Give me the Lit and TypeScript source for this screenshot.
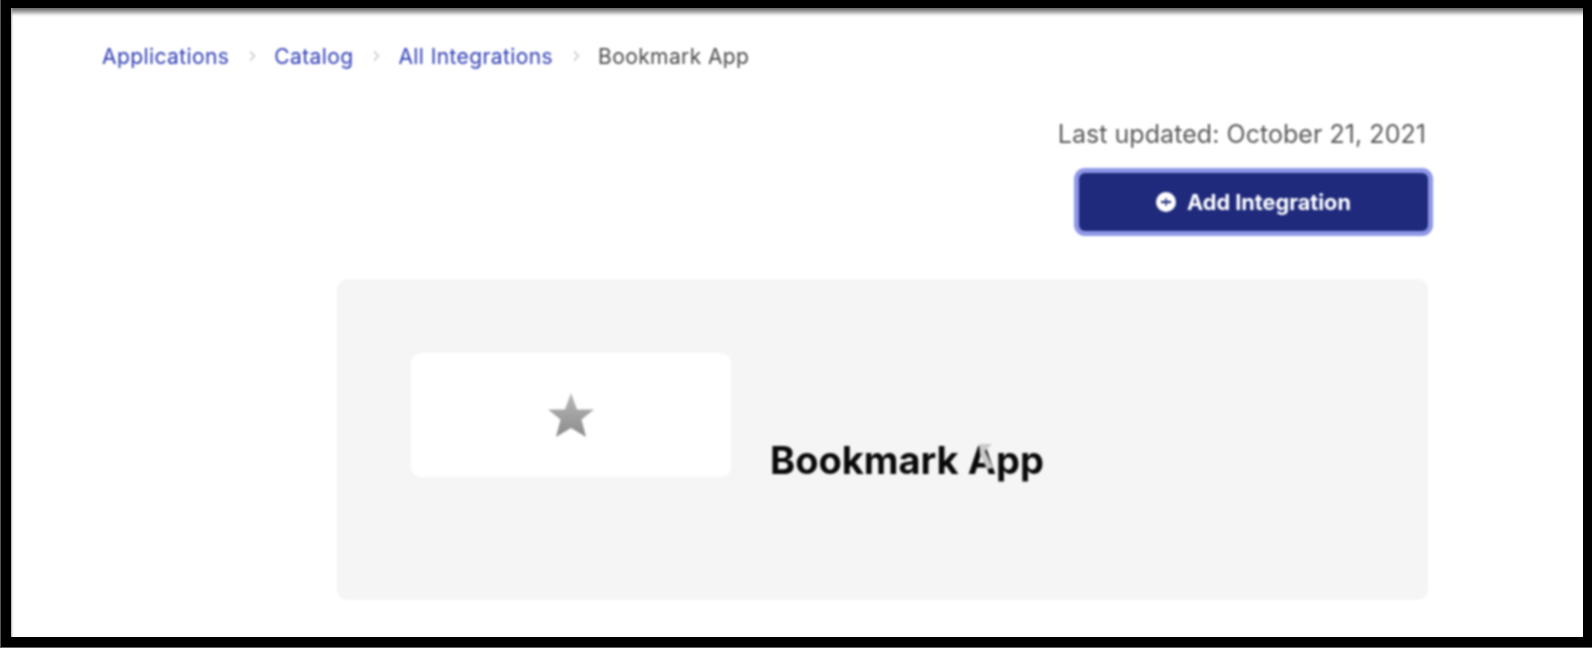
import { LitElement, html, css } from 'lit';
import { customElement } from 'lit/decorators.js';

@customElement('app-root')
export class AppRoot extends LitElement {
  static styles = css`
    :host {
      display: block;
      width: 1592px;
      height: 648px;
      background: #000;
      font-family: Inter, "Liberation Sans", sans-serif;
    }
    .frame {
      box-sizing: border-box;
      width: 1592px;
      height: 648px;
      padding: 8px 9px 10px 10px;
      border-left: 1px solid #555;
      border-bottom: 1px solid #666;
    }
    .screen {
      box-sizing: border-box;
      height: 100%;
      padding: 34px 155px 0 91px;
      background: linear-gradient(#666, #999 3px, #eee 7px, #fff 9px) top / 100% 9px no-repeat, #fff;
      box-shadow: inset 2px 0 2px -1px #aaa;
      display: flex;
      flex-direction: column;
    }
    .crumbs, .meta, .card { filter: blur(0.8px); }
    .crumbs {
      display: flex;
      align-items: center;
      height: 28px;
      font-size: 21px;
      letter-spacing: 0.4px;
      color: #4a4a4a;
    }
    .crumbs a { color: #2c3cb4; text-decoration: none; }
    .sep { width: 45px; display: flex; justify-content: center; }
    .meta {
      display: flex;
      flex-direction: column;
      align-items: flex-end;
      margin-top: 49px;
    }
    .updated { font-size: 25px; letter-spacing: 0.05px; line-height: 30px; color: #5a5a5a; padding-right: 2px; }
    .add {
      margin-top: 24px;
      box-sizing: border-box;
      width: 349px;
      height: 58px;
      border: 0;
      border-radius: 6px;
      background: #1f2a7c;
      box-shadow: 0 0 0 5px #8d97e6;
      color: #fff;
      font: 700 21.7px Inter, "Liberation Sans", sans-serif;
      display: flex;
      align-items: center;
      justify-content: center;
      gap: 11px;
    }
    .card {
      margin: 48px 0 0 235px;
      height: 321px;
      background: #f5f5f5;
      border-radius: 10px;
      display: flex;
      align-items: flex-start;
      padding: 74px 0 0 74px;
      box-sizing: border-box;
    }
    .logo {
      width: 320px;
      height: 124px;
      background: #fff;
      border-radius: 10px;
      display: flex;
      align-items: center;
      justify-content: center;
    }
    h1 {
      position: relative;
      margin: 85px 0 0 39px;
      font-size: 38px;
      line-height: 44px;
      font-weight: 700;
      color: #0a0a0a;
    }
    /* pointer caught in the recording, sits over the A */
    .pointer { position: absolute; left: 205px; top: 4px; }
  `;

  render() {
    return html`
      <div class="frame">
        <div class="screen">
          <nav class="crumbs">
            <a href="#">Applications</a>${this.sep()}
            <a href="#">Catalog</a>${this.sep()}
            <a href="#">All Integrations</a>${this.sep()}
            <span>Bookmark App</span>
          </nav>
          <div class="meta">
            <div class="updated">Last updated: October 21, 2021</div>
            <button class="add">
              <svg width="20" height="20" viewBox="0 0 20 20">
                <circle cx="10" cy="10" r="10" fill="#fff"></circle>
                <path d="M5 10h10" stroke="#1f2a7c" stroke-width="2.2"></path>
                <path d="M10 6v8" stroke="#1f2a7c" stroke-width="1.4"></path>
              </svg>
              Add Integration
            </button>
          </div>
          <section class="card">
            <div class="logo">
              <svg width="46" height="44" viewBox="0 0 46 44">
                <defs>
                  <linearGradient id="star" x1="0" y1="0" x2="0" y2="1">
                    <stop offset="0" stop-color="#b8b8b8"></stop>
                    <stop offset="1" stop-color="#8c8c8c"></stop>
                  </linearGradient>
                </defs>
                <path d="M23 0l6 16.5H46L33.5 26.5 38 44 23 35 8 44l4.5-17.5L0 16.5h17z" fill="url(#star)"></path>
              </svg>
            </div>
            <h1>
              Bookmark App
              <svg class="pointer" width="20" height="28" viewBox="0 0 20 28">
                <path d="M4 2h13l-7 7 8 17-6 1-7-15z" fill="#c9c9c9"></path>
              </svg>
            </h1>
          </section>
        </div>
      </div>
    `;
  }

  sep() {
    return html`<span class="sep">
      <svg width="8" height="12" viewBox="0 0 8 12">
        <path d="M2 1.5L6.5 6 2 10.5" fill="none" stroke="#c4c4c4" stroke-width="1.4"></path>
      </svg>
    </span>`;
  }
}
